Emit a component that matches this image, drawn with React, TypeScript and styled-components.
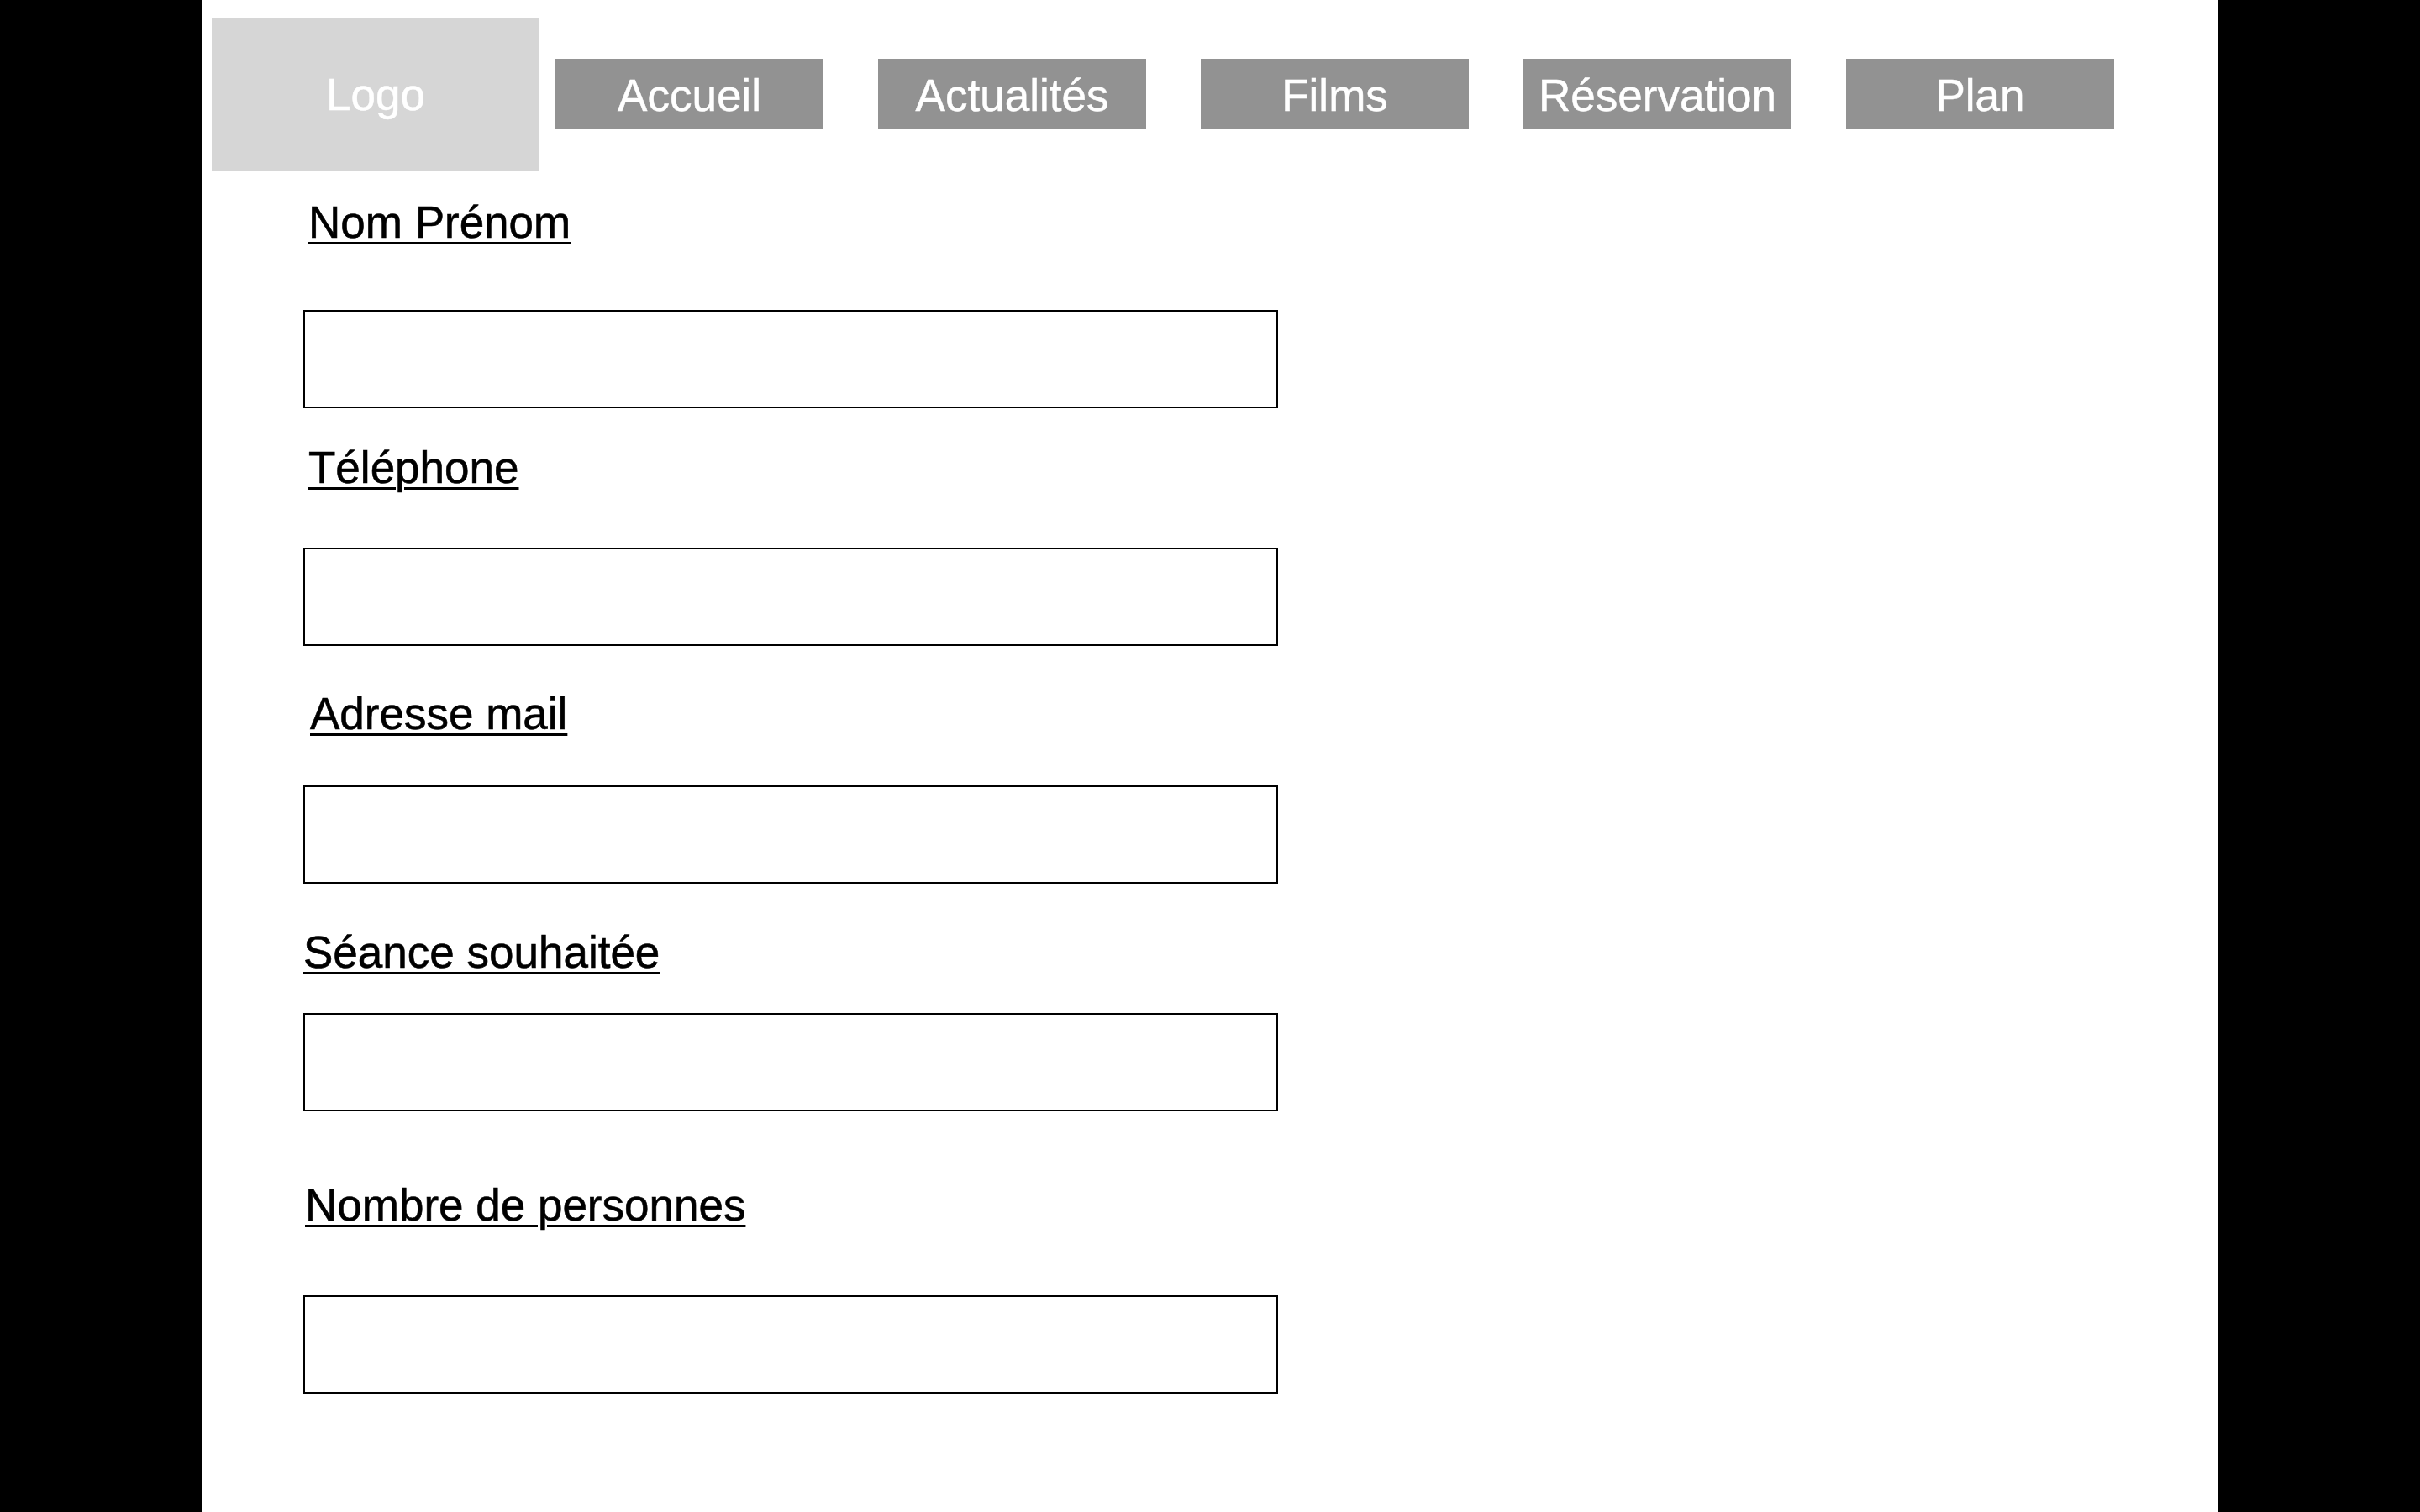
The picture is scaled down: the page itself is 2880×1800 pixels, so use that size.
import React from "react";
import styled, { createGlobalStyle } from "styled-components";

const GlobalStyle = createGlobalStyle`
  html, body {
    margin: 0;
    padding: 0;
    background: #000000;
  }
  body {
    font-family: "Liberation Sans", Arial, Helvetica, sans-serif;
  }
`;

const Canvas = styled.div`
  width: 2400px;
  min-height: 1800px;
  margin: 0 auto;
  background: #ffffff;
  display: flex;
  flex-direction: column;
`;

const Header = styled.header`
  display: flex;
  align-items: center;
  gap: 19px;
  padding: 21px 0 0 12px;
`;

const LogoBox = styled.div`
  width: 390px;
  height: 182px;
  background: #d6d6d6;
  color: #ffffff;
  font-size: 53px;
  -webkit-text-stroke: 0.5px #ffffff;
  display: flex;
  align-items: center;
  justify-content: center;
`;

const Nav = styled.nav`
  display: flex;
  gap: 65px;
`;

const NavButton = styled.div`
  width: 319px;
  height: 84px;
  background: #929292;
  color: #ffffff;
  font-size: 53px;
  line-height: 1;
  -webkit-text-stroke: 0.5px #ffffff;
  display: flex;
  align-items: center;
  justify-content: center;
  padding-top: 2px;
  box-sizing: border-box;
`;

const Form = styled.form`
  display: flex;
  flex-direction: column;
  padding-left: 121px;
`;

const Label = styled.label<{ $top: number; $indent: number }>`
  display: block;
  margin-top: ${(p) => p.$top}px;
  margin-left: ${(p) => p.$indent}px;
  font-size: 53px;
  line-height: 52px;
  color: #000000;
  -webkit-text-stroke: 0.6px #000000;
  text-decoration: underline;
  text-decoration-thickness: 3px;
  text-underline-offset: 5px;
`;

const Field = styled.div<{ $top: number }>`
  box-sizing: border-box;
  width: 1160px;
  height: 117px;
  margin-top: ${(p) => p.$top}px;
  border: 2px solid #000000;
  background: #ffffff;
`;

const navItems = ["Accueil", "Actualités", "Films", "Réservation", "Plan"];

const fields = [
  { label: "Nom Prénom", labelTop: 36, indent: 6, fieldTop: 78 },
  { label: "Téléphone", labelTop: 45, indent: 6, fieldTop: 69 },
  { label: "Adresse mail", labelTop: 55, indent: 8, fieldTop: 59 },
  { label: "Séance souhaitée", labelTop: 56, indent: 0, fieldTop: 46 },
  { label: "Nombre de personnes", labelTop: 86, indent: 2, fieldTop: 81 },
];

export default function App() {
  return (
    <>
      <GlobalStyle />
      <Canvas>
        <Header>
          <LogoBox>Logo</LogoBox>
          <Nav>
            {navItems.map((item) => (
              <NavButton key={item}>{item}</NavButton>
            ))}
          </Nav>
        </Header>
        <Form>
          {fields.map((f) => (
            <React.Fragment key={f.label}>
              <Label $top={f.labelTop} $indent={f.indent}>
                {f.label}
              </Label>
              <Field $top={f.fieldTop} />
            </React.Fragment>
          ))}
        </Form>
      </Canvas>
    </>
  );
}
